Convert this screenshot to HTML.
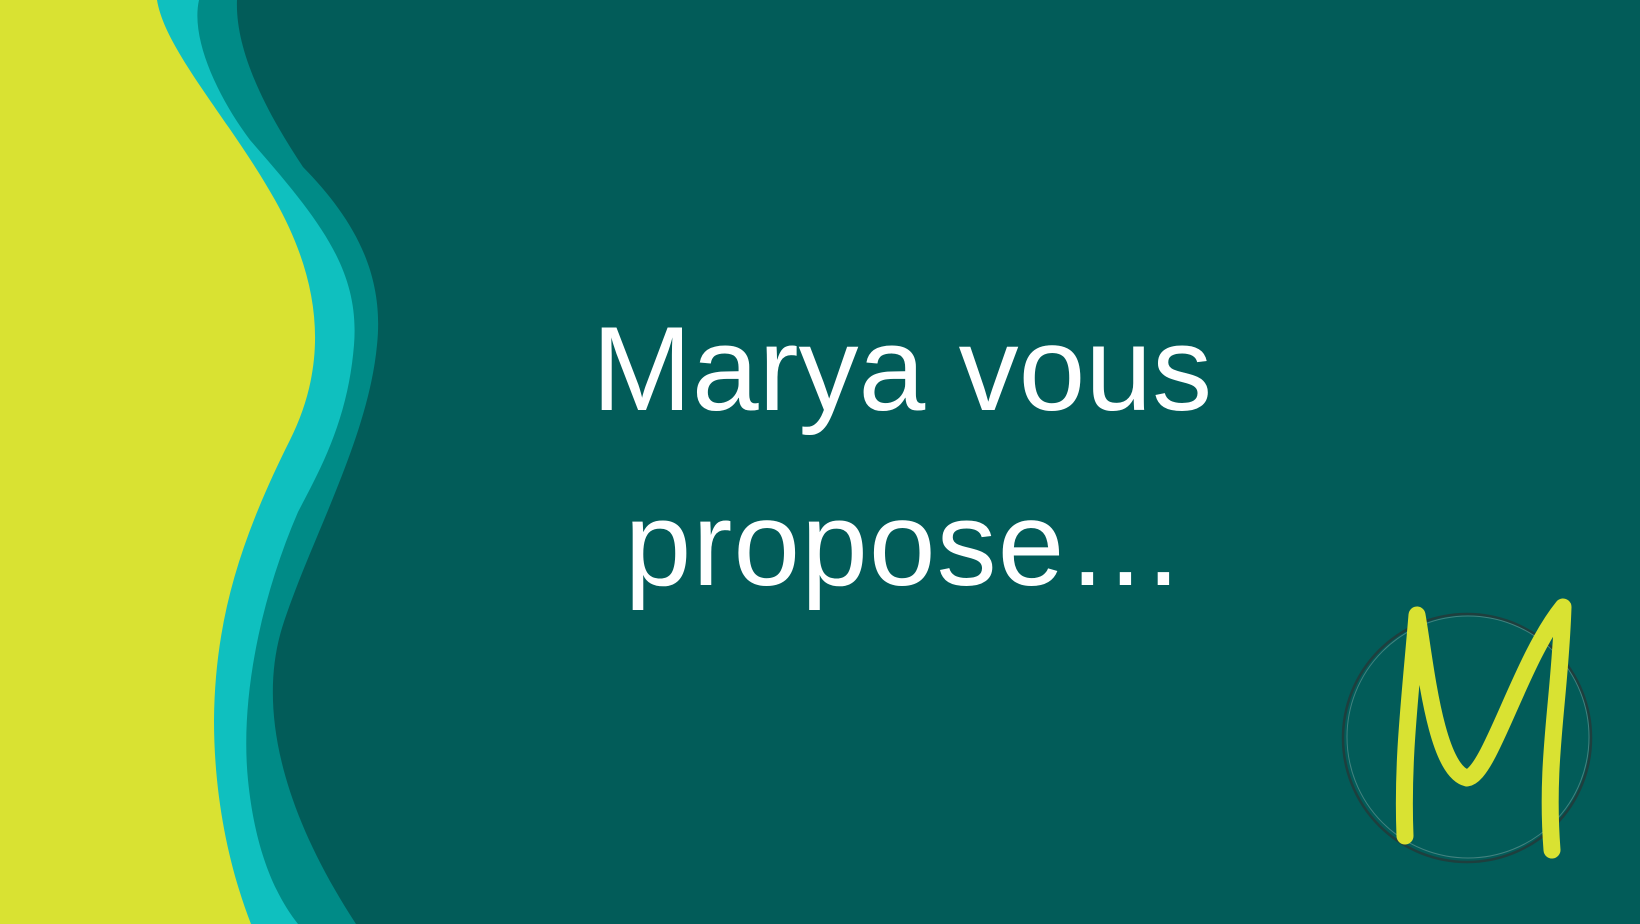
<!DOCTYPE html>
<html><head><style>
html,body{margin:0;padding:0;width:1640px;height:924px;overflow:hidden;background:#025c59}
svg{position:absolute;left:0;top:0}
.t{position:absolute;left:0;width:1804px;text-align:center;color:#fff;font-family:"Liberation Sans",sans-serif;font-size:120px;line-height:1;}
</style></head><body>
<svg width="1640" height="924" viewBox="0 0 1640 924">
<rect width="1640" height="924" fill="#025c59"/>
<path d="M0,0 L237,0 C235,50 265,110 303,167 C350,215 385,270 377,345 C368,440 310,540 282,628 C260,700 275,800 356,924 L0,924Z" fill="#008b87"/>
<path d="M0,0 L199,0 C190,40 220,100 250,140 C320,220 360,270 354,345 C348,420 320,470 298,512 C260,600 240,700 248,780 C255,850 275,895 298,924 L0,924Z" fill="#0fc0bf"/>
<path d="M0,0 L157,0 C165,50 230,120 275,200 C320,280 330,360 290,440 C240,540 215,620 214,720 C214,800 230,870 251,924 L0,924Z" fill="#d9e232"/>
<circle cx="1467" cy="738" r="124" fill="none" stroke="#1e3f3e" stroke-width="2.5"/>
<circle cx="1468" cy="737" r="121" fill="none" stroke="#7fa8a6" stroke-width="1" opacity=".5"/>
<path d="M1405,836 C1402,760 1410,700 1417,615 C1425,660 1435,770 1467,778 C1490,775 1520,660 1563,607 C1560,700 1545,760 1552,850" fill="none" stroke="#d9e232" stroke-width="17" stroke-linecap="round" stroke-linejoin="round"/>
</svg>
<div class="t" style="top:309px">Marya vous</div>
<div class="t" style="top:484px;letter-spacing:1px">propose<span style="letter-spacing:-6px">…</span></div>
</body></html>
